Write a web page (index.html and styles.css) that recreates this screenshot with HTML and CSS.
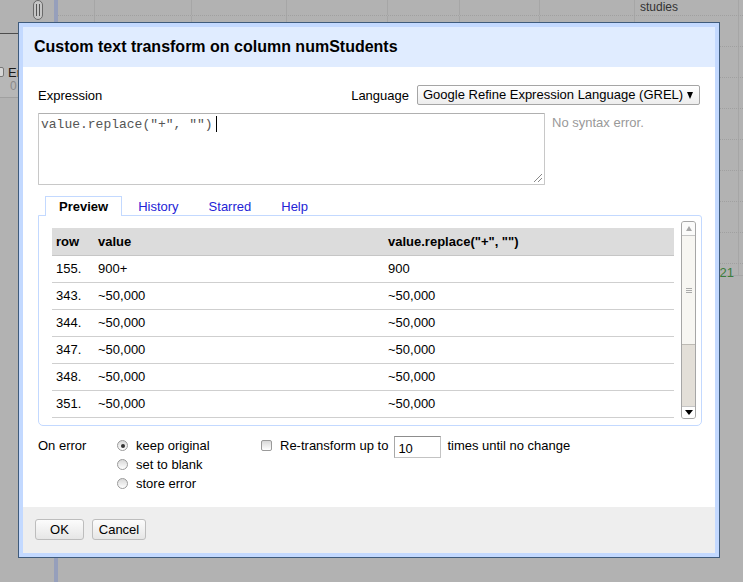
FILE: index.html
```html
<!DOCTYPE html>
<html>
<head>
<meta charset="utf-8">
<link rel="stylesheet" href="styles.css">
</head>
<body>
<div class="bg">
  <div class="leftcol">
    <div class="lc-top"><span class="pill"><span class="pillbar"></span></span></div>
    <div class="facet"><span class="fbox"></span><span class="fname">En</span><span class="fcount">0</span></div>
  </div>
  <div class="blueline"></div>
  <div class="grid">
    <div class="bgrow bghead">
      <div class="c c2"></div><div class="c c3"></div><div class="c c4"></div><div class="c c5"></div><div class="c c6"></div><div class="c c7"></div><div class="c c8"></div>
      <div class="c c9 hd">studies</div>
    </div>
    <div class="bgrow">
      <div class="c c2"></div>
      <div class="c c3 num">7002</div>
      <div class="c c4 num">1123</div>
      <div class="c c5"></div>
      <div class="c c6 txt">Philly</div>
      <div class="c c7 num">2434</div>
      <div class="c c8 num">13</div>
      <div class="c c9"></div>
    </div>
    <div class="bgrow"><div class="c c2"></div><div class="c c3"></div><div class="c c4"></div><div class="c c5"></div><div class="c c6"></div><div class="c c7"></div><div class="c c8"></div><div class="c c9"></div></div>
    <div class="bgrow"><div class="c c2"></div><div class="c c3"></div><div class="c c4"></div><div class="c c5"></div><div class="c c6"></div><div class="c c7"></div><div class="c c8"></div><div class="c c9"></div></div>
    <div class="bgrow"><div class="c c2"></div><div class="c c3"></div><div class="c c4"></div><div class="c c5"></div><div class="c c6"></div><div class="c c7"></div><div class="c c8"></div><div class="c c9"></div></div>
    <div class="bgrow"><div class="c c2"></div><div class="c c3"></div><div class="c c4"></div><div class="c c5"></div><div class="c c6"></div><div class="c c7"></div><div class="c c8"></div><div class="c c9"></div></div>
    <div class="bgrow"><div class="c c2"></div><div class="c c3"></div><div class="c c4"></div><div class="c c5"></div><div class="c c6"></div><div class="c c7"></div><div class="c c8"></div><div class="c c9"></div></div>
    <div class="bgrow"><div class="c c2"></div><div class="c c3"></div><div class="c c4"></div><div class="c c5"></div><div class="c c6"></div><div class="c c7"></div><div class="c c8"></div><div class="c c9"></div></div>
    <div class="bgrow"><div class="c c2"></div><div class="c c3"></div><div class="c c4"></div><div class="c c5"></div><div class="c c6"></div><div class="c c7"></div><div class="c c8"></div><div class="c c9"></div></div>
    <div class="bgrow lastrow"><div class="c c2"></div><div class="c c3"></div><div class="c c4"></div><div class="c c5"></div><div class="c c6"></div><div class="c c7"></div><div class="c c8"></div><div class="c c9 green">21</div></div>
  </div>
</div>

<div class="dialog">
  <div class="dlg-head">Custom text transform on column numStudents</div>
  <div class="dlg-body">
    <div class="expr-row">
      <span>Expression</span>
      <span class="lang"><span>Language</span><span class="select">Google Refine Expression Language (GREL)<span class="arrow"></span></span></span>
    </div>
    <div class="editor-row">
      <div class="textarea">value.replace("+", "")<span class="caret"></span><span class="grip"></span></div>
      <div class="status">No syntax error.</div>
    </div>
    <div class="tabs">
      <span class="tab active">Preview</span>
      <span class="tab">History</span>
      <span class="tab">Starred</span>
      <span class="tab">Help</span>
    </div>
    <div class="panel">
      <div class="viewport">
        <table class="preview">
          <thead>
            <tr><th class="col-row">row</th><th class="col-val">value</th><th>value.replace("+", "")</th></tr>
          </thead>
          <tbody>
            <tr><td>155.</td><td>900+</td><td>900</td></tr>
            <tr><td>343.</td><td>~50,000</td><td>~50,000</td></tr>
            <tr><td>344.</td><td>~50,000</td><td>~50,000</td></tr>
            <tr><td>347.</td><td>~50,000</td><td>~50,000</td></tr>
            <tr><td>348.</td><td>~50,000</td><td>~50,000</td></tr>
            <tr><td>351.</td><td>~50,000</td><td>~50,000</td></tr>
          </tbody>
        </table>
      </div>
      <div class="scrollbar">
        <div class="sb-up"><span class="tri-up"></span></div>
        <div class="sb-thumb"><span class="gripl"></span></div>
        <div class="sb-track"></div>
        <div class="sb-down"><span class="tri-down"></span></div>
      </div>
    </div>
    <div class="options">
      <div class="opt-label">On error</div>
      <div class="radios">
        <div class="ropt"><span class="radio checked"></span>keep original</div>
        <div class="ropt"><span class="radio"></span>set to blank</div>
        <div class="ropt"><span class="radio"></span>store error</div>
      </div>
      <div class="repeat"><span class="check"></span>Re-transform up to <span class="num-input">10</span> times until no change</div>
    </div>
  </div>
  <div class="dlg-foot">
    <span class="btn ok">OK</span>
    <span class="btn cancel">Cancel</span>
  </div>
</div>
</body>
</html>
```

FILE: styles.css
```css
* { box-sizing: border-box; }
html, body { margin: 0; padding: 0; }
body {
  width: 743px;
  height: 582px;
  overflow: hidden;
  position: relative;
  background: #b2b2b2;
  font-family: "Liberation Sans", Arial, sans-serif;
  font-size: 13px;
  color: #000;
}

/* ---------- dimmed background page ---------- */
.bg { display: flex; height: 582px; }
.leftcol { width: 54px; flex: none; display: flex; flex-direction: column; }
.lc-top { height: 34px; position: relative; border-bottom: 1px solid #4d4d4d; }
.pill {
  position: absolute; left: 33px; top: 0; width: 10px; height: 20px;
  border: 1px solid #6a6a6a; border-radius: 5px; background: #c6c6c6;
}
.pillbar { position: absolute; left: 2px; top: 3px; width: 4px; height: 12px; border-left: 1px solid #555; border-right: 1px solid #555; }
.facet { height: 64px; position: relative; background: #b7b7b7; border-bottom: 1px solid #a0a0a0; }
.fbox { position: absolute; left: -5px; top: 33px; width: 9px; height: 10px; border: 1px solid #777; border-radius: 2px; background: #d6d6d6; }
.fname { position: absolute; left: 8px; top: 31px; color: #1a1a1a; font-size: 13px; }
.fcount { position: absolute; left: 10px; top: 45px; color: #8a8a8a; font-size: 12px; }
.blueline { width: 4px; flex: none; background: #969fbb; }

.grid { flex: 1; display: flex; flex-direction: column; }
.bgrow { display: flex; height: 31px; border-bottom: 1px dotted #a0a0a0; }
.bghead { height: 16px; }
.lastrow { height: 12px; border-bottom: 1px solid #a6a6a6; }
.c { flex: none; border-right: 1px solid #a6a6a6; position: relative; overflow: visible; }
.c2 { width: 37px; }
.c3 { width: 97px; }
.c4 { width: 95px; }
.c5 { width: 101px; }
.c6 { width: 72px; }
.c7 { width: 80px; }
.c8 { width: 95px; }
.c9 { width: 104px; }
.hd { padding: 0 0 0 5px; color: #333; font-size: 12px; line-height: 15px; }
.num { text-align: right; padding-right: 8px; color: #3d6b3d; line-height: 15px; padding-top: 4px; font-size: 12px; }
.txt { padding-left: 4px; color: #333; line-height: 15px; padding-top: 4px; font-size: 12px; }
.green { text-align: right; padding-right: 4px; color: #3b7d3b; font-size: 13px; line-height: 12px; padding-top: 3px; }

/* ---------- dialog ---------- */
.dialog {
  position: absolute;
  left: 18px; top: 22px;
  width: 702px; height: 536px;
  border: 1px solid #3f5b7c;
  background: #c3d9ff;
  padding: 4px;
  display: flex;
  flex-direction: column;
}
.dlg-head {
  height: 40px;
  flex: none;
  background: #e0ecff;
  padding: 0 0 0 11px;
  display: flex;
  align-items: center;
  font-size: 16px;
  font-weight: bold;
  color: #000;
}
.dlg-body {
  flex: 1;
  background: #fff;
  padding: 18px 15px 0 15px;
}
.dlg-foot {
  flex: none;
  height: 46px;
  background: #eeeeee;
  padding: 12px 12px 0 12px;
  display: flex;
  gap: 8px;
  align-items: flex-start;
}

.expr-row { display: flex; justify-content: space-between; align-items: center; height: 20px; }
.lang { display: flex; align-items: center; gap: 8px; }
.select {
  position: relative;
  width: 283px; height: 20px;
  border: 1px solid #a5a5a5;
  border-radius: 2px;
  background: linear-gradient(#ffffff, #ededed);
  padding: 0 0 0 5px;
  line-height: 18px;
}
.arrow {
  position: absolute; right: 6px; top: 6px;
  width: 0; height: 0;
  border-left: 3.5px solid transparent;
  border-right: 3.5px solid transparent;
  border-top: 7px solid #000;
}

.editor-row { display: flex; margin-top: 8px; }
.textarea {
  position: relative;
  width: 507px; height: 72px;
  border: 1px solid #c8c8c8;
  border-top-color: #b0b0b0;
  border-radius: 1px;
  font-family: "Liberation Mono", "Courier New", monospace;
  font-size: 13px;
  color: #555;
  padding: 2px 0 0 2px;
  line-height: 16px;
}
.caret { display: inline-block; width: 1px; height: 16px; background: #000; vertical-align: -4px; margin-left: 3px; }
.grip {
  position: absolute; right: 2px; bottom: 2px; width: 8px; height: 8px;
  background: linear-gradient(135deg, transparent 45%, #888 45%, #888 52%, transparent 52%, transparent 70%, #888 70%, #888 77%, transparent 77%);
}
.status { margin-left: 7px; padding-top: 2px; color: #999; }

.tabs { display: flex; margin-top: 11px; padding-left: 7px; position: relative; z-index: 1; margin-bottom: -1px; }
.tab {
  height: 20px;
  padding: 0 13px;
  margin-right: 2px;
  border: 1px solid transparent;
  border-bottom: none;
  line-height: 20px;
  color: #2424d6;
}
.tab.active {
  border-color: #c3d9ff;
  background: #fff;
  color: #000;
  font-weight: bold;
}

.panel {
  display: flex;
  margin-right: -2px;
  border: 1px solid #c3d9ff;
  border-radius: 0 3px 5px 5px;
  padding: 5px 5px 6px 6px;
}
.viewport { width: 636px; height: 198px; padding: 7px; overflow: hidden; }
.preview { width: 622px; border-collapse: collapse; }
.preview th, .preview td {
  text-align: left;
  padding: 0 0 0 4px;
  height: 27px;
  border-bottom: 1px solid #cfcfcf;
  white-space: nowrap;
}
.preview th { background: #dcdcdc; font-weight: bold; height: 27px; border-bottom-color: #c6c6c6; }
.col-row { width: 42px; }
.col-val { width: 290px; }

.scrollbar {
  width: 15px; height: 198px;
  border: 1px solid #a6a6a6;
  border-radius: 3px;
  display: flex; flex-direction: column;
  overflow: hidden;
  background: #e3dfd8;
}
.sb-up { height: 14px; background: #fbfbfa; border-bottom: 1px solid #c5c5c5; display: flex; justify-content: center; align-items: center; }
.tri-up { width: 0; height: 0; border-left: 3.5px solid transparent; border-right: 3.5px solid transparent; border-bottom: 5px solid #a8a8a8; }
.sb-thumb { height: 109px; background: #f7f6f2; border-bottom: 1px solid #bdbab4; display: flex; justify-content: center; align-items: center; }
.gripl { width: 6px; height: 5px; border-top: 1px solid #aaa; border-bottom: 1px solid #aaa; position: relative; }
.gripl::after { content: ""; position: absolute; left: 0; right: 0; top: 1px; border-top: 1px solid #aaa; }
.sb-track { flex: 1; }
.sb-down { height: 12px; background: #fff; border-top: 1px solid #c5c5c5; display: flex; justify-content: center; align-items: center; }
.tri-down { width: 0; height: 0; border-left: 4px solid transparent; border-right: 4px solid transparent; border-top: 5px solid #000; }

.options { display: flex; margin-top: 10px; line-height: 19px; }
.opt-label { width: 79px; }
.radios { width: 144px; display: flex; flex-direction: column; }
.ropt { display: flex; align-items: center; height: 19px; }
.radio {
  width: 11px; height: 11px;
  border-radius: 50%;
  border: 1px solid #9a9a9a;
  background: linear-gradient(#d8d8d8, #ffffff);
  margin: 0 8px 0 0;
  position: relative;
  flex: none;
}
.radio.checked::after {
  content: ""; position: absolute; left: 2.5px; top: 2.5px; width: 4px; height: 4px; border-radius: 50%; background: #333;
}
.repeat { display: flex; align-items: center; height: 19px; }
.check {
  width: 11px; height: 11px;
  border: 1px solid #9a9a9a;
  border-radius: 2px;
  background: linear-gradient(#d8d8d8, #ffffff);
  margin-right: 8px;
  flex: none;
}
.num-input {
  display: inline-block;
  width: 47px; height: 22px;
  margin: 2px 6px 0 6px;
  border: 1px solid #c3c3c3;
  border-top-color: #8d8d8d;
  border-left-color: #a8a8a8;
  padding: 3px 0 0 3px;
  line-height: 17px;
}

.btn {
  height: 21px;
  border: 1px solid #bdbdbd;
  border-radius: 3px;
  background: linear-gradient(#fcfcfc, #e6e6e6);
  text-align: center;
  line-height: 19px;
  color: #000;
}
.ok { width: 49px; }
.cancel { width: 54px; }
```
